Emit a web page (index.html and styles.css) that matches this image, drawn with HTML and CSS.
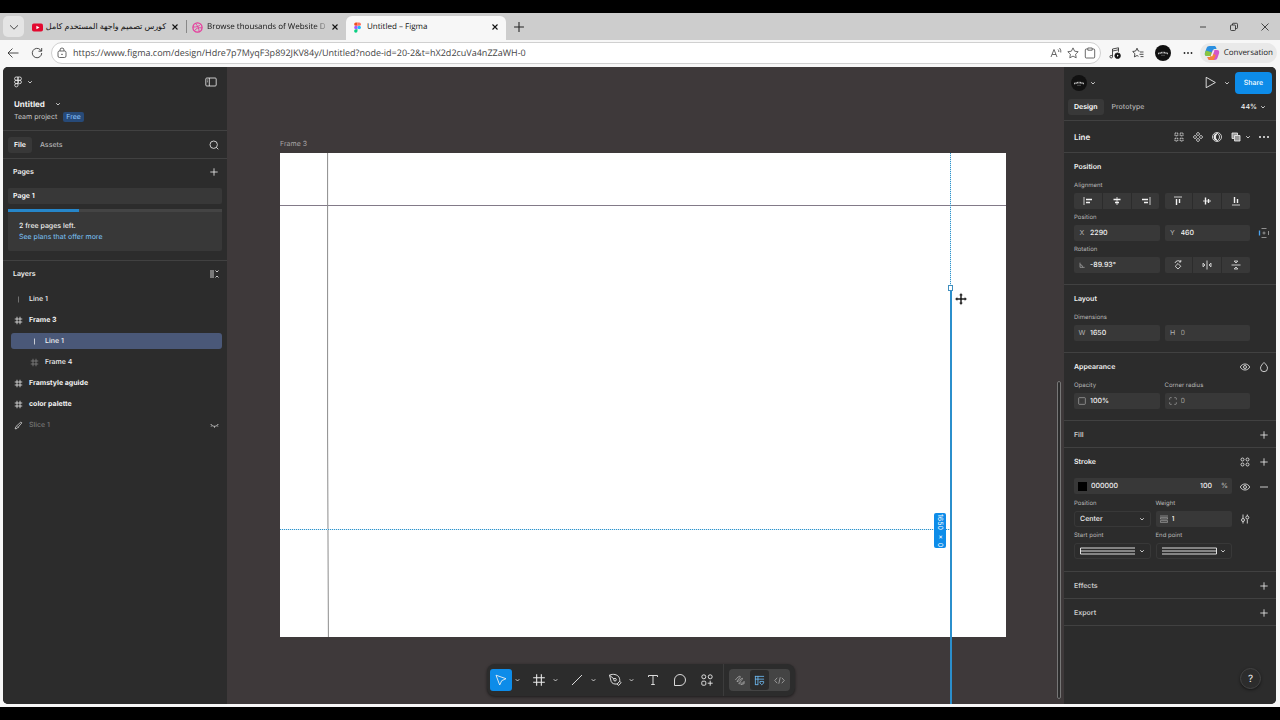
FILE: index.html
```html
<!DOCTYPE html>
<html lang="en">
  <head>
    <meta charset="UTF-8" />
    <meta name="viewport" content="width=device-width, initial-scale=1.0" />
    <title>Untitled – Figma</title>
    <link rel="stylesheet" href="styles.css">
  </head>
  <body>
    <!-- Shared icons -->
    <svg class="sprite" aria-hidden="true">
      <symbol id="caret" viewBox="0 0 6 6"><path d="M1.2 2.2 3 4l1.8-1.8" /></symbol>
      <symbol id="plus" viewBox="0 0 12 12"><path d="M6 2.3v7.4M2.3 6h7.4" /></symbol>
      <symbol id="minus" viewBox="0 0 12 12"><path d="M2 6h8" /></symbol>
      <symbol id="close" viewBox="0 0 12 12"><path d="M3 3l6 6M9 3l-6 6" /></symbol>
      <symbol id="frame" viewBox="0 0 12 12"><path d="M4 1v10M8 1v10M1 4h10M1 8h10" /></symbol>
      <symbol id="eye" viewBox="0 0 12 12"><path d="M1.3 6C3.2 2 8.800 2 10.700 6 8.800 10 3.200 10 1.300 6z" /><circle cx="6" cy="6" r="1.500" /></symbol>
      <symbol id="badge" viewBox="0 0 16 16"><circle cx="8" cy="8" r="8" fill="#111" stroke="none" /><path d="M3.200 8.700Q8 6.500 12.800 8.700" stroke="#ccc" stroke-width="1.600" stroke-dasharray="1 .5" /><path d="M6 10.300h4" stroke="#777" stroke-width=".6" /></symbol>
    </svg>

    <div class="browser">
      <!-- Tab strip -->
      <header class="tabstrip">
        <button class="tab-menu" aria-label="Tab menu"><svg class="icon" viewBox="0 0 12 12"><path d="M2 4.300 6 8.200l4-3.900" /></svg></button>
        <div class="tab">
          <svg class="favicon" viewBox="0 0 12 12"><rect x="0" y="1.700" width="12" height="8.600" rx="2" fill="#e3092f" /><path d="M4.800 4v4l3.400-2z" fill="#fff" /></svg>
          <span class="tab-title" dir="rtl" lang="ar">كورس تصميم واجهة المستخدم كامل</span>
          <button class="tab-close" aria-label="Close tab"><svg><use href="#close" /></svg></button>
        </div>
        <div class="tab divided">
          <svg class="favicon" viewBox="0 0 12 12" fill="none"><circle cx="6" cy="6" r="5" stroke-width="1.400" /><path d="M4 1.800C6.500 4.500 7.500 7 7.800 10.500M1.200 5.500C5 5.600 8 4.700 9.400 2.600M2.700 9.700C4.500 6.500 7.500 5.700 10.900 6.500" /></svg>
          <span class="tab-title fade">Browse thousands of Website Des</span>
          <button class="tab-close" aria-label="Close tab"><svg><use href="#close" /></svg></button>
        </div>
        <div class="tab active">
          <svg class="favicon" viewBox="0 0 12 12"><path d="M4.200.5H6v3.700H4.200a1.850 1.850 0 0 1 0-3.700z" fill="#f24e1e" /><path d="M6 .5h1.900a1.850 1.850 0 0 1 0 3.700H6z" fill="#ff7262" /><path d="M4.200 4.200H6v3.700H4.200a1.850 1.850 0 0 1 0-3.700z" fill="#a259ff" /><circle cx="7.900" cy="6.050" r="1.850" fill="#1abcfe" /><path d="M4.200 7.900H6v1.800a1.850 1.850 0 1 1-1.800-1.800z" fill="#0acf83" /></svg>
          <span class="tab-title">Untitled – Figma</span>
          <button class="tab-close" aria-label="Close tab"><svg><use href="#close" /></svg></button>
        </div>
        <button class="new-tab" aria-label="New tab"><svg class="icon"><use href="#plus" /></svg></button>
        <div class="window-buttons">
          <button aria-label="Minimize"><svg class="icon" viewBox="0 0 12 12"><path d="M3 6h6" /></svg></button>
          <button aria-label="Restore"><svg class="icon" viewBox="0 0 12 12"><rect x="2.500" y="4" width="5" height="5.500" rx="1" /><path d="M4.500 4V3a.7.7 0 0 1 .7-.7h3.300a1 1 0 0 1 1 1v3.400a.8.800 0 0 1-.8.800H7.500" /></svg></button>
          <button aria-label="Close"><svg class="icon" viewBox="0 0 12 12"><path d="M2.500 2.500l7 7M9.500 2.500l-7 7" /></svg></button>
        </div>
      </header>

      <!-- Address bar -->
      <nav class="addressbar">
        <button aria-label="Back"><svg class="icon" viewBox="0 0 12 12"><path d="M11.500 6H1M5.500 1.500 1 6l4.500 4.500" /></svg></button>
        <button aria-label="Refresh"><svg class="icon" viewBox="0 0 12 12"><path d="M10.700 6a4.700 4.700 0 1 1-1.300-3.200L10.500 4M10.700 1v3.200H7.500" /></svg></button>
        <div class="url">
          <svg class="icon" viewBox="0 0 12 12"><rect x="2" y="4" width="8" height="6.500" rx="1.500" /><path d="M4 4V3a2 2 0 0 1 4 0v1" /><circle cx="6" cy="7.300" r=".4" /></svg>
          <input type="text" aria-label="Address" value="https://www.figma.com/design/Hdre7p7MyqF3p892JKV84y/Untitled?node-id=20-2&amp;t=hX2d2cuVa4nZZaWH-0">
          <button aria-label="Read aloud"><svg class="icon" viewBox="0 0 12 12"><path d="M1 10 4 2.500 7 10M2.200 7.500h3.800M8 2.500q1 1 .8 2.500M9.500 1q1.800 2 1.300 4.500" /></svg></button>
          <button aria-label="Add to favorites"><svg class="icon" viewBox="0 0 12 12"><path d="M6 .9l1.600 3.300 3.600.5-2.600 2.500.6 3.600L6 9.100l-3.200 1.700.6-3.600L.8 4.700l3.600-.5z" /></svg></button>
          <button aria-label="Collections"><svg class="icon" viewBox="0 0 12 12"><path d="M3.500 2H2.300A1 1 0 0 0 1.300 3v7a1 1 0 0 0 1 1h7.400a1 1 0 0 0 1-1V3a1 1 0 0 0-1-1H8.500M3.800 1v2.200h4.400V1z" /></svg></button>
        </div>
        <div class="browser-actions">
          <button aria-label="Media"><svg class="icon" viewBox="0 0 12 12"><path d="M3.500 9.500V2l6-1.200v4M3.500 4l6-1.200" /><circle cx="2.200" cy="9.700" r="1.300" /><circle cx="8.600" cy="8.700" r="2.800" fill="#111" /><path d="M8 7.600v2.200l1.700-1.100z" fill="#fff" stroke="none" /></svg></button>
          <button aria-label="Favorites"><svg class="icon" viewBox="0 0 12 12"><path d="M7.500 4.300 6.300 4 5 1.200 3.700 4 .7 4.500l2.200 2.200-.5 3.200L5 8.500l1.500.8M8 5h3.500M7.500 7.300h4M8.500 9.600h3" /></svg></button>
          <button class="profile" aria-label="Profile"><svg><use href="#badge" /></svg></button>
          <button aria-label="More"><svg class="icon dots" viewBox="0 0 12 12"><circle cx="2.500" cy="6" r=".9" /><circle cx="6" cy="6" r=".9" /><circle cx="9.500" cy="6" r=".9" /></svg></button>
        </div>
        <button class="copilot">
          <svg viewBox="0 0 16 16"><path d="M5.500 1h4.800c1 0 1.500.6 1.800 1.500L12.600 4H9.700L7.300 11H3C.8 11 .5 9.200 1 7.500l1.500-4.300C3 1.700 4 1 5.500 1z" fill="#2a8fe0" /><path d="M2 5.500 1 8c-.5 1.800 0 3 2 3h4.300l1-3.500z" fill="#8ac43f" /><path d="M10.500 15H5.700c-1 0-1.500-.6-1.800-1.500L3.400 12h2.900L8.700 5H13c2.200 0 2.500 1.800 2 3.500l-1.500 4.300c-.5 1.500-1.500 2.200-3 2.200z" fill="#d457c8" /><path d="M3.400 12h2.900l1.200-3.500 4.300 1.500-2 5H5.700c-1 0-1.500-.6-1.800-1.500z" fill="#f5823a" /><path d="M8.900 5.200h1.600L8.300 11.200H6.700z" fill="#f4f4f4" /></svg>
          Conversation
        </button>
      </nav>

      <main class="app">
        <!-- Left panel -->
        <aside class="panel left">
          <div class="file-head">
            <div class="row">
              <button class="menu" aria-label="Main menu">
                <svg class="icon" viewBox="0 0 12 12"><path d="M6 1H4.200a1.650 1.650 0 0 0 0 3.300H6zM6 1h1.800a1.650 1.650 0 0 1 0 3.300H6zM6 4.300H4.200a1.650 1.650 0 0 0 0 3.300H6zM4.200 7.600A1.650 1.650 0 1 0 6 9.300V7.600z" /><circle cx="7.700" cy="6" r="1.700" /></svg>
                <svg class="caret"><use href="#caret" /></svg>
              </button>
              <button aria-label="Toggle panel"><svg class="icon" viewBox="0 0 12 12"><rect x=".8" y="2" width="10.400" height="8" rx="1" /><path d="M4.300 2v8M2.200 4h.8M2.200 5.800h.8" /></svg></button>
            </div>
            <button class="file-name">Untitled <svg class="caret"><use href="#caret" /></svg></button>
            <div class="project"><span>Team project</span><span class="plan">Free</span></div>
          </div>

          <div class="row panel-tabs">
            <div>
              <button class="active">File</button>
              <button>Assets</button>
            </div>
            <button aria-label="Search"><svg class="icon" viewBox="0 0 12 12"><circle cx="5.700" cy="5.700" r="3.700" /><path d="M8.400 8.400 10.300 10.300" /></svg></button>
          </div>

          <section class="pages">
            <div class="row"><h2>Pages</h2><button aria-label="Add page"><svg class="icon"><use href="#plus" /></svg></button></div>
            <a class="page" href="#page-1">Page 1</a>
            <div class="usage">
              <div class="usage-bar"><span></span></div>
              <p>2 free pages left.</p>
              <a href="#plans">See plans that offer more</a>
            </div>
          </section>

          <section class="layers">
            <div class="row"><h2>Layers</h2><button aria-label="Collapse layers"><svg class="icon" viewBox="0 0 12 12"><path d="M2 3h4M2 5h4M2 7h4M2 9h4M7.500 2.500 9 4l1.500-1.500M7.500 9.500 9 8l1.500 1.500" /></svg></button></div>
            <ul>
              <li class="dim-icon"><svg viewBox="0 0 12 12"><path d="M6 2v8" /></svg>Line 1</li>
              <li class="strong"><svg><use href="#frame" /></svg>Frame 3</li>
              <li class="child selected"><svg viewBox="0 0 12 12"><path d="M6 2v8" /></svg>Line 1</li>
              <li class="child dim-icon"><svg><use href="#frame" /></svg>Frame 4</li>
              <li class="strong"><svg><use href="#frame" /></svg>Framstyle aguide</li>
              <li class="strong"><svg><use href="#frame" /></svg>color palette</li>
              <li class="hidden-layer"><svg viewBox="0 0 12 12"><path d="M1.500 10.500 4 10l6.500-7.500-1.300-1.200L2.500 7.500zM4.500 7.500 6 9" /></svg>Slice 1
                <button aria-label="Show layer"><svg viewBox="0 0 12 12"><path d="M1 4c2 4 8 4 10 0M2.500 6 1.500 7.500M6 7v2M9.500 6l1 1.500" /></svg></button>
              </li>
            </ul>
          </section>
        </aside>

        <!-- Canvas -->
        <div class="canvas">
          <span class="frame-label">Frame 3</span>
          <div class="artboard"></div>
          <div class="line header-line"></div>
          <svg class="line margin-line" viewBox="0 0 2 484" preserveAspectRatio="none"><path d="M.6 0v280L1.400 484" /></svg>
          <div class="snap snap-x"></div>
          <div class="snap snap-y"></div>
          <div class="line drawn-line"></div>
          <div class="handle"></div>
          <span class="size-tag">1650 × 0</span>
          <svg class="cursor" viewBox="0 0 14 14"><path d="M7 .8 9.200 3.500H8v2.500h2.500V4.800L13.200 7l-2.700 2.200V8H8v2.500h1.200L7 13.200 4.800 10.500H6V8H3.500v1.200L.8 7l2.700-2.200V6H6V3.500H4.800z" /></svg>
          <div class="scrollbar"></div>

          <div class="toolbar-wrap">
            <div class="toolbar">
              <div class="tool"><button class="active" aria-label="Move"><svg viewBox="0 0 14 14"><path d="M2 2.200 12 5.700 7.700 7.700 5.700 12z" /></svg></button><svg class="caret"><use href="#caret" /></svg></div>
              <div class="tool"><button aria-label="Frame"><svg><use href="#frame" /></svg></button><svg class="caret"><use href="#caret" /></svg></div>
              <div class="tool"><button aria-label="Line"><svg viewBox="0 0 14 14"><path d="M2 12 12 2" /></svg></button><svg class="caret"><use href="#caret" /></svg></div>
              <div class="tool"><button aria-label="Pen"><svg viewBox="0 0 14 14"><path d="M1.500 2.200C5 .5 9.500 1.500 11 4.200c.8 1.500.8 2.800.7 4L9.200 11C6 11.300 4 10.500 3.200 8.500zM9.200 11l1.300 1.500L13 9.700l-1.300-1.500M1.500 2.200 6 6" /><circle cx="7" cy="6.700" r="1.300" /></svg></button><svg class="caret"><use href="#caret" /></svg></div>
              <button aria-label="Text"><svg viewBox="0 0 14 14"><path d="M2.500 4V2.500h9V4M7 2.500v9M5.200 11.500h3.600" /></svg></button>
              <button aria-label="Comment"><svg viewBox="0 0 14 14"><path d="M1.500 12.500V7A5.500 5.500 0 1 1 7 12.500z" /></svg></button>
              <button aria-label="Actions"><svg viewBox="0 0 14 14"><circle cx="3.800" cy="3.800" r="2" /><circle cx="10.200" cy="3.800" r="2" /><rect x="1.800" y="8.200" width="4" height="4" rx="1" /><path d="M10.200 7.700v5M7.700 10.200h5" /></svg></button>
              <span class="separator"></span>
              <div class="modes">
                <button aria-label="Draw"><svg viewBox="0 0 12 12"><path d="M1.500 5.500C3 3 6 .8 6.800 1.500 7.800 2.500 2.500 6.500 3.300 7.300 4 8 8.500 2.800 9.300 3.600 10 4.500 4.500 8.700 5.300 9.500 6 10 8 8 8.300 7.600M7.500 10.500 11 7v2.500z" /></svg></button>
                <button class="active" aria-label="Design"><svg viewBox="0 0 12 12"><path d="M1 1.500h10M1 4.500h10M1.500 1v10M4.300 1v10M1.500 10.500h2.800M6.500 7h4v1.700L8.500 10.700 6.500 8.700z" /></svg></button>
                <button aria-label="Dev mode"><svg viewBox="0 0 12 12"><path d="M3.500 3 .8 6l2.700 3M8.500 3l2.700 3-2.700 3M6.800 2.500l-1.600 7" /></svg></button>
              </div>
            </div>
          </div>
        </div>

        <!-- Right panel -->
        <aside class="panel right">
          <div class="right-head">
            <div class="row">
              <button class="menu account" aria-label="Account"><svg><use href="#badge" /></svg><svg class="caret"><use href="#caret" /></svg></button>
              <div class="present">
                <button class="menu" aria-label="Present"><svg class="icon" viewBox="0 0 12 12"><path d="M2 1.200v9.600L10.500 6z" /></svg><svg class="caret"><use href="#caret" /></svg></button>
                <button class="share">Share</button>
              </div>
            </div>
            <div class="row panel-tabs">
              <div>
                <button class="active">Design</button>
                <button>Prototype</button>
              </div>
              <button class="zoom">44% <svg class="caret"><use href="#caret" /></svg></button>
            </div>
          </div>

          <div class="row selection">
            <h2>Line</h2>
            <div class="actions">
              <button aria-label="Detach"><svg class="icon" viewBox="0 0 12 12"><path d="M2 2h2.800v2.800H2zM7.200 2H10v2.800H7.200zM2 7.200h2.800V10H2zM7.200 7.200H10V10H7.200z" stroke-dasharray="1.500 .6" /></svg></button>
              <button aria-label="Create component"><svg class="icon" viewBox="0 0 12 12"><path d="M6 1.200 7.700 3 6 4.800 4.300 3zM6 7.200 7.700 9 6 10.800 4.300 9zM3 4.300 4.800 6 3 7.700 1.200 6zM9 4.300 10.800 6 9 7.700 7.200 6z" /></svg></button>
              <button aria-label="Mask"><svg class="icon" viewBox="0 0 12 12"><circle cx="6" cy="6" r="4.500" /><path d="M6.500 2.500a4 4 0 0 0 0 7 3.500 3.500 0 0 1 0-7z" fill="currentColor" /><path d="M6.500 2.500a4 4 0 0 1 0 7" /></svg></button>
              <button class="menu" aria-label="Boolean"><svg class="icon" viewBox="0 0 12 12"><path d="M2 2h5.500v2.500H10V10H4.500V7.500H2z" fill="#999" /><path d="M4.500 7.500v-3h3" /></svg><svg class="caret"><use href="#caret" /></svg></button>
              <button aria-label="More"><svg class="icon dots" viewBox="0 0 12 12"><circle cx="2" cy="6" r="1" /><circle cx="6" cy="6" r="1" /><circle cx="10" cy="6" r="1" /></svg></button>
            </div>
          </div>

          <section>
            <div class="row"><h2>Position</h2></div>
            <div class="fields">
              <span class="caption wide">Alignment</span>
              <div class="group">
                <button aria-label="Align left"><svg class="icon" viewBox="0 0 12 12"><path d="M2 2v8" /><path class="thick" d="M4 4.500h6M4 7.500h4" /></svg></button>
                <button aria-label="Align center"><svg class="icon" viewBox="0 0 12 12"><path d="M6 2v8" /><path class="thick" d="M2.500 4.500h7M4 7.500h4" /></svg></button>
                <button aria-label="Align right"><svg class="icon" viewBox="0 0 12 12"><path d="M10 2v8" /><path class="thick" d="M2 4.500h6M4 7.500h4" /></svg></button>
              </div>
              <div class="group">
                <button aria-label="Align top"><svg class="icon" viewBox="0 0 12 12"><path d="M2 2h8" /><path class="thick" d="M4.500 4v6M7.500 4v4" /></svg></button>
                <button aria-label="Align middle"><svg class="icon" viewBox="0 0 12 12"><path d="M2 6h8" /><path class="thick" d="M4.500 2.500v7M7.500 4v4" /></svg></button>
                <button aria-label="Align bottom"><svg class="icon" viewBox="0 0 12 12"><path d="M2 10h8" /><path class="thick" d="M4.500 2v6M7.500 4v4" /></svg></button>
              </div>
              <span class="caption wide">Position</span>
              <label class="field"><span class="prefix">X</span><input type="text" value="2290"></label>
              <label class="field"><span class="prefix">Y</span><input type="text" value="460"></label>
              <button class="side" aria-label="Absolute position"><svg class="icon" viewBox="0 0 12 12"><path d="M3.500 1.500h5M3.500 10.500h5M10.500 4v4M6 4.500v3M4.500 6h3" stroke="#aaa" /><path d="M1.500 3.500v5" stroke="#4aa3f0" stroke-width="1.300" /></svg></button>
              <label class="caption wide" for="rotation">Rotation</label>
              <div class="field"><svg class="prefix" viewBox="0 0 12 12"><path d="M3 2.500v7h7M3 5.500a4 4 0 0 1 4 4" /></svg><input id="rotation" type="text" value="-89.93°"></div>
              <div class="group">
                <button aria-label="Rotate"><svg class="icon" viewBox="0 0 12 12"><path d="M6 4.500 8.800 7.300 6 10 3.200 7.300zM3 4a3.300 3.300 0 0 1 5.500-1.300M8.800 1v2H7" /></svg></button>
                <button aria-label="Flip horizontal"><svg class="icon" viewBox="0 0 12 12"><path d="M6 1.500v9M2 4.200v3.600L4 6zM10 4.200v3.600L8 6z" /></svg></button>
                <button aria-label="Flip vertical"><svg class="icon" viewBox="0 0 12 12"><path d="M1.500 6h9M4.200 2h3.600L6 4zM4.200 10h3.600L6 8z" /></svg></button>
              </div>
            </div>
          </section>

          <section>
            <div class="row"><h2>Layout</h2></div>
            <div class="fields">
              <span class="caption wide">Dimensions</span>
              <label class="field"><span class="prefix">W</span><input type="text" value="1650"></label>
              <label class="field muted"><span class="prefix">H</span><input type="text" value="0"></label>
            </div>
          </section>

          <section>
            <div class="row">
              <h2>Appearance</h2>
              <div class="actions">
                <button aria-label="Visibility"><svg class="icon"><use href="#eye" /></svg></button>
                <button aria-label="Blend mode"><svg class="icon" viewBox="0 0 12 12"><path d="M6 1.500C7.500 3 9.500 5 9.500 7.200a3.500 3.500 0 0 1-7 0C2.500 5 4.500 3 6 1.500z" /></svg></button>
              </div>
            </div>
            <div class="fields">
              <label class="caption" for="opacity">Opacity</label>
              <label class="caption wide-rest" for="radius">Corner radius</label>
              <div class="field"><svg class="prefix" viewBox="0 0 12 12"><rect x="1" y="1" width="10" height="10" rx="1" /><path d="M4 8h.1M6 8h.1M8 8h.1M6 6h.1M8 6h.1M8 4h.1" /></svg><input id="opacity" type="text" value="100%"></div>
              <div class="field muted"><svg class="prefix" viewBox="0 0 12 12"><path d="M1 4V2a1 1 0 0 1 1-1h2M8 1h2a1 1 0 0 1 1 1v2M11 8v2a1 1 0 0 1-1 1H8M4 11H2a1 1 0 0 1-1-1V8" /></svg><input id="radius" type="text" value="0"></div>
            </div>
          </section>

          <section>
            <div class="row"><h2 class="empty">Fill</h2><button aria-label="Add fill"><svg class="icon"><use href="#plus" /></svg></button></div>
          </section>

          <section>
            <div class="row">
              <h2>Stroke</h2>
              <div class="actions">
                <button aria-label="Styles"><svg class="icon" viewBox="0 0 12 12"><circle cx="3.500" cy="3.500" r="1.500" /><circle cx="8.500" cy="3.500" r="1.500" /><circle cx="3.500" cy="8.500" r="1.500" /><circle cx="8.500" cy="8.500" r="1.500" /></svg></button>
                <button aria-label="Add stroke"><svg class="icon"><use href="#plus" /></svg></button>
              </div>
            </div>
            <div class="fields stroke-fields">
              <div class="field color">
                <span class="swatch"></span>
                <input type="text" aria-label="Stroke color" value="000000">
                <input class="alpha" type="text" aria-label="Stroke opacity" value="100">
                <span class="unit">%</span>
              </div>
              <button class="side" aria-label="Visibility"><svg class="icon"><use href="#eye" /></svg></button>
              <button class="side" aria-label="Remove stroke"><svg class="icon"><use href="#minus" /></svg></button>
              <label class="caption" for="stroke-position">Position</label>
              <label class="caption wide-rest" for="weight">Weight</label>
              <div class="select">
                <select id="stroke-position"><option>Center</option><option>Inside</option><option>Outside</option></select>
                <svg class="caret"><use href="#caret" /></svg>
              </div>
              <div class="field"><svg class="prefix" viewBox="0 0 12 12"><path d="M0 1.500h12M.5 4h11v2H.5zM.5 8.500h11v2.500H.5z" /></svg><input id="weight" type="text" value="1"></div>
              <button class="side" aria-label="Advanced stroke"><svg class="icon" viewBox="0 0 12 12"><path d="M4 1.500v4M4 8.500v2M8.300 6.500v4M8.300 1.500v1.500" /><circle cx="4" cy="7" r="1.500" /><circle cx="8.300" cy="4.500" r="1.500" /></svg></button>
              <span class="caption first">Start point</span>
              <span class="caption wide-rest">End point</span>
              <button class="select first" aria-label="Start point"><svg class="cap" viewBox="0 0 55 8"><path d="M55 1H.5v6H55M.5 4H55" /></svg><svg class="caret"><use href="#caret" /></svg></button>
              <button class="select" aria-label="End point"><svg class="cap" viewBox="0 0 55 8"><path d="M0 1h54.500v6H0M0 4h54.500" /></svg><svg class="caret"><use href="#caret" /></svg></button>
            </div>
          </section>

          <section>
            <div class="row"><h2 class="empty">Effects</h2><button aria-label="Add effect"><svg class="icon"><use href="#plus" /></svg></button></div>
          </section>
          <section class="last">
            <div class="row"><h2 class="empty">Export</h2><button aria-label="Add export"><svg class="icon"><use href="#plus" /></svg></button></div>
          </section>

          <button class="help" aria-label="Help">?</button>
        </aside>
      </main>
    </div>
  </body>
</html>
```

FILE: styles.css
```css
* {
  box-sizing: border-box;
}

body {
  margin: 0;
  height: 100vh;
  padding: 13px 0;
  background: #000;
  font-family: Inter, "Liberation Sans", sans-serif;
  font-size: 8px;
  line-height: 12px;
  text-rendering: geometricPrecision;
  overflow: hidden;
}

button,
input,
select {
  margin: 0;
  padding: 0;
  border: 0;
  background: none;
  color: inherit;
  font: inherit;
  text-rendering: inherit;
  outline: none;
}

button {
  display: flex;
  align-items: center;
  justify-content: center;
}

h2,
p,
ul {
  margin: 0;
  padding: 0;
  font-size: inherit;
}

svg {
  flex: none;
  fill: none;
  stroke: currentColor;
}

.sprite {
  position: absolute;
  width: 0;
  height: 0;
}

.icon {
  width: 12px;
  height: 12px;
  stroke-width: 0.8;
}

.caret {
  width: 6px;
  height: 6px;
  stroke-width: 0.8;
}

.dots {
  fill: currentColor;
  stroke: none;
}

/* Browser chrome */
.browser {
  display: flex;
  flex-direction: column;
  height: 100%;
  background: #f7f7f7;
  color: #222;
}

.tabstrip,
.addressbar {
  font-family: "Open Sans", "Noto Sans", sans-serif;
}

.tabstrip {
  display: flex;
  align-items: center;
  height: 27px;
  padding: 3px 0 0 3px;
  background: #cdcdcd;
}

.tab-menu {
  width: 21px;
  height: 21px;
  margin: 0 2px 3px 0;
  border-radius: 5px;
  background: #e4e4e4;
}

.tab {
  display: flex;
  align-items: center;
  gap: 4px;
  width: 160px;
  height: 24px;
  padding: 0 6px 2px;
  color: #111;
}

.tab.divided {
  background: linear-gradient(#888, #888) 0 4px / 1px 13px no-repeat;
}

.tab.active {
  border-radius: 6px 6px 0 0;
  background: #f7f7f7;
}

.favicon {
  width: 11px;
  height: 11px;
  stroke: none;
}

.tab.divided .favicon {
  stroke: #e6399b;
}

.tab-title {
  flex: 1;
  min-width: 0;
  white-space: nowrap;
}

/* Long titles fade out before the close button */
.tab-title.fade {
  mask-image: linear-gradient(to right, #000 90%, #0004);
}

.tab-close svg {
  width: 10px;
  height: 10px;
  stroke-width: 1.3;
}

.new-tab {
  width: 26px;
  padding-bottom: 3px;
}

.new-tab .icon {
  width: 16px;
  height: 16px;
}

.window-buttons {
  display: flex;
  margin-left: auto;
  padding-bottom: 3px;
}

.window-buttons button {
  width: 31px;
}

.addressbar {
  display: flex;
  align-items: center;
  height: 27px;
  padding: 0 3px 2px 7px;
  gap: 12px;
}

.url {
  display: flex;
  align-items: center;
  flex: 1;
  gap: 5px;
  height: 22px;
  margin-left: -4px;
  padding: 0 4px;
  border: 1px solid #d0d0d0;
  border-radius: 11px;
  background: #fff;
  color: #444;
}

.url input {
  flex: 1;
  font-size: 9px;
}

.browser-actions {
  display: flex;
  align-items: center;
  gap: 11px;
  margin-left: -4px;
}

.profile svg {
  width: 16px;
  height: 16px;
}

.copilot {
  gap: 4px;
  height: 20px;
  margin-left: -6px;
  padding: 0 4px;
  border-radius: 10px;
  background: #e9e9e9;
}

.copilot svg {
  width: 16px;
  height: 16px;
  stroke: none;
}

/* App shell */
.app {
  display: flex;
  flex: 1;
  min-height: 0;
  margin: 0 4px 3px 3px;
  border-radius: 5px;
  background: #2c2c2c;
  overflow: hidden;
}

.panel {
  flex: none;
  background: #2c2c2c;
  color: #f2f2f2;
  font-size: 7px;
}

.row {
  display: flex;
  align-items: center;
  justify-content: space-between;
}

.menu {
  gap: 3px;
}

.panel-tabs > div {
  display: flex;
  gap: 2px;
}

.panel-tabs > div button {
  height: 16px;
  padding: 0 6px;
  border-radius: 3px;
  color: #b5b5b5;
  font-weight: 500;
}

.panel-tabs > div .active {
  background: #383838;
  color: #fff;
  font-weight: 600;
}

.left {
  width: 224px;
}

.left > * {
  padding: 0 7px 0 5px;
  border-bottom: 1px solid #414141;
}

.left h2 {
  padding-left: 5px;
  font-weight: 600;
}

.file-head {
  height: 64px;
}

.file-head .row {
  height: 30px;
  padding: 0 3px 0 4px;
}

.file-name {
  gap: 10px;
  padding-left: 6px;
  font-size: 8px;
  line-height: 14px;
  font-weight: 700;
}

.project {
  display: flex;
  align-items: center;
  gap: 6px;
  padding-left: 6px;
  color: #c5c5c5;
}

.plan {
  padding: 0 3px;
  border-radius: 2px;
  background: #274a78;
  color: #8cc4ff;
  line-height: 10px;
}

.left .panel-tabs {
  height: 28px;
}

.pages {
  height: 102px;
}

.pages .row,
.layers .row {
  height: 26px;
}

.page {
  display: block;
  margin: 3px -2px 5px 0;
  padding: 0 5px;
  border-radius: 2px;
  background: #383838;
  color: #fff;
  font-weight: 600;
  line-height: 16px;
  text-decoration: none;
}

.usage {
  margin-right: -2px;
  padding-bottom: 9px;
  border-radius: 2px;
  background: #383838;
  line-height: 11px;
}

.usage-bar {
  height: 3px;
  margin-bottom: 8px;
  background: #444;
}

.usage-bar span {
  display: block;
  width: 33%;
  height: 100%;
  background: #2686c9;
}

.usage p {
  padding-left: 11px;
  font-weight: 500;
}

.usage a {
  padding-left: 11px;
  color: #7cc4f8;
  text-decoration: none;
}

.layers {
  border: 0;
}

.layers ul {
  display: flex;
  flex-direction: column;
  gap: 5px;
  margin: 4px -2px 0 3px;
  list-style: none;
}

.layers li {
  display: flex;
  align-items: center;
  gap: 6px;
  height: 16px;
  padding: 0 3px;
  border-radius: 3px;
  font-weight: 500;
}

.layers li svg {
  width: 9px;
  height: 9px;
}

.layers .child {
  padding-left: 19px;
}

.layers .strong {
  font-weight: 700;
}

.layers .selected {
  background: #4a5878;
}

.layers .dim-icon svg {
  color: #888;
}

.layers .hidden-layer {
  color: #777;
}

.hidden-layer svg {
  color: #ddd;
}

.hidden-layer button {
  margin-left: auto;
}

/* Canvas */
.canvas {
  position: relative;
  flex: 1;
  min-width: 0;
  background: #3e393a;
  overflow: hidden;
}

.canvas > * {
  position: absolute;
}

.frame-label {
  top: 71px;
  left: 53px;
  color: #a9a5a6;
  font-size: 7px;
}

.artboard {
  top: 86px;
  left: 53px;
  width: 726px;
  height: 484px;
  background: #fff;
}

.header-line {
  top: 138px;
  left: 53px;
  width: 726px;
  height: 1px;
  background: #827a88;
}

.margin-line {
  top: 86px;
  left: 100px;
  width: 2px;
  height: 484px;
  color: #8c8c8c;
}

.snap-x {
  top: 86px;
  left: 723px;
  width: 1px;
  height: 135px;
  background: repeating-linear-gradient(#2d93cc 0 1px, #d4eaf6 1px 2px);
}

.snap-y {
  top: 462px;
  left: 53px;
  width: 671px;
  height: 1px;
  background: repeating-linear-gradient(to right, #2d93cc 0 1px, #d4eaf6 1px 2px);
}

.drawn-line {
  top: 221px;
  bottom: 0;
  left: 723px;
  width: 2px;
  background: #2b8fcc;
}

.handle {
  top: 218px;
  left: 721px;
  width: 5px;
  height: 6px;
  border: 1px solid #3f8fbf;
  background: #fff;
}

.size-tag {
  top: 446px;
  left: 707px;
  padding: 1px 0;
  border-radius: 2px;
  background: #0d8ce9;
  color: #fff;
  font-size: 7px;
  writing-mode: vertical-rl;
}

.cursor {
  top: 225px;
  left: 727px;
  width: 14px;
  height: 14px;
  fill: #222;
  stroke: #fff;
  stroke-width: 0.5;
}

.scrollbar {
  top: 314px;
  right: 3px;
  bottom: 5px;
  width: 4px;
  border: 1px solid #777;
  border-radius: 2px;
  background: #2c2c2c;
}

.toolbar-wrap {
  right: 10px;
  bottom: 8px;
  left: 0;
  display: flex;
  justify-content: center;
}

.toolbar {
  display: flex;
  align-items: center;
  gap: 5px;
  height: 32px;
  padding: 0 5px 0 3px;
  border-radius: 8px;
  background: #2c2c2c;
  box-shadow: 0 1px 3px #0008;
  color: #eee;
}

.toolbar button {
  width: 22px;
  height: 22px;
  border-radius: 3px;
}

.toolbar button svg {
  width: 14px;
  height: 14px;
  stroke-width: 0.9;
}

.tool {
  display: flex;
  align-items: center;
}

.tool .caret {
  width: 11px;
}

.tool .active {
  background: #0d8ce9;
}

.separator {
  width: 1px;
  height: 32px;
  background: #3c3c3c;
}

.modes {
  display: flex;
  align-items: center;
  gap: 1px;
  height: 22px;
  padding: 0 1px;
  border-radius: 4px;
  background: #444;
  color: #aaa;
}

.toolbar .modes button {
  width: 19px;
  height: 20px;
}

.toolbar .modes svg {
  width: 11px;
  height: 11px;
}

.modes .active {
  background: #2c2c2c;
  color: #6fbcf5;
}

/* Right panel */
.right {
  position: relative;
  width: 212px;
}

.right > * {
  padding: 0 6px 0 10px;
  border-top: 1px solid #414141;
}

.right h2 {
  font-weight: 600;
}

.right h2.empty {
  color: #c8c8c8;
}

.right > .right-head {
  height: 53px;
  padding: 4px 4px 0;
  border: 0;
}

.right-head > .row:first-child {
  height: 23px;
  padding-left: 3px;
}

.account svg:first-child {
  width: 16px;
  height: 16px;
}

.present {
  display: flex;
  gap: 5px;
}

.present .menu {
  gap: 7px;
}

.present .icon {
  width: 13px;
  height: 13px;
}

.share {
  width: 37px;
  height: 22px;
  border-radius: 4px;
  background: #0d8ce9;
  color: #fff;
  font-weight: 500;
}

.right-head .panel-tabs {
  height: 26px;
}

.zoom {
  gap: 3px;
  padding-right: 6px;
  font-weight: 500;
}

.selection {
  height: 32px;
}

.right .selection h2 {
  font-size: 8px;
}

.actions {
  display: flex;
  gap: 7px;
}

.right section .row {
  height: 26px;
  padding-top: 1px;
}

.right .last {
  border-bottom: 1px solid #414141;
}

.fields {
  display: grid;
  grid-template-columns: 1fr 1fr 15px;
  gap: 3px 5px;
  padding: 1px 0 11px;
}

.stroke-fields {
  grid-template-columns: 1fr 1fr 14px 14px;
  padding: 4px 0 12px;
}

.caption {
  height: 10px;
  color: #b8b8b8;
  font-size: 6px;
  line-height: 11px;
}

.wide {
  grid-column: 1 / -1;
}

.wide-rest {
  grid-column: 2 / -1;
}

.first {
  grid-column: 1;
}

.group {
  display: flex;
  gap: 1px;
}

.group button {
  flex: 1;
  height: 16px;
  background: #383838;
}

.group button:first-child {
  border-radius: 2px 0 0 2px;
}

.group button:last-child {
  border-radius: 0 2px 2px 0;
}

.thick {
  stroke-width: 1.4;
}

.field {
  display: flex;
  align-items: center;
  gap: 4px;
  height: 16px;
  padding: 0 4px;
  border-radius: 2px;
  background: #383838;
  font-weight: 500;
}

.field input {
  flex: 1;
  width: 0;
}

.prefix {
  width: 8px;
  height: 12px;
  color: #b0b0b0;
  font-weight: 400;
  text-align: center;
}

.muted input {
  color: #8c8c8c;
}

.side {
  justify-content: flex-end;
}

.color {
  grid-column: 1 / 3;
  margin-bottom: 1px;
}

.field .alpha {
  flex: none;
  width: 17px;
}

.unit {
  width: 7px;
  color: #b0b0b0;
}

.swatch {
  width: 9px;
  height: 9px;
  background: #000;
}

.select {
  display: flex;
  align-items: center;
  justify-content: space-between;
  height: 16px;
  padding: 0 5px;
  border: 1px solid #383838;
  border-radius: 3px;
  font-weight: 500;
}

.select select {
  flex: 1;
  appearance: none;
}

.cap {
  width: 55px;
  height: 8px;
  stroke-width: 0.9;
}

.right > .help {
  position: absolute;
  right: 15px;
  bottom: 15px;
  width: 21px;
  height: 21px;
  padding: 0;
  border: 1px solid #444;
  border-radius: 50%;
  background: #2c2c2c;
  box-shadow: 0 1px 3px #0008;
  font-size: 10px;
}
```
